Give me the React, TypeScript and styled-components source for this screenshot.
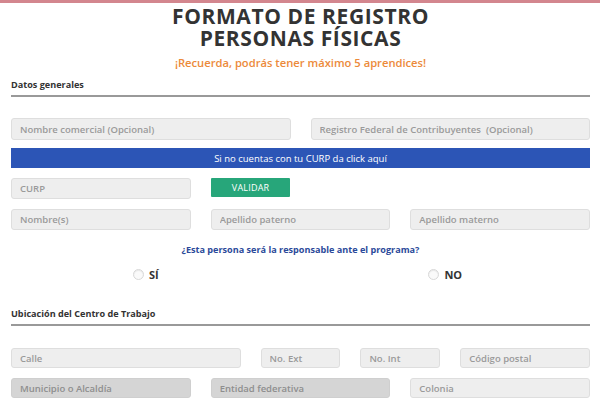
import React from "react";
import styled, { createGlobalStyle } from "styled-components";

const Global = createGlobalStyle`
  html, body { margin: 0; padding: 0; background: #fff; }
  body { font-family: "Open Sans", "Liberation Sans", sans-serif; }
  * { box-sizing: border-box; }
`;

const Page = styled.div`
  width: 600px;
  height: 403px;
  overflow: hidden;
  border-top: 3px solid #d3868e;
  padding: 0 10px 0 11px;
`;

const Title = styled.h1`
  margin: 2px 0 0;
  text-align: center;
  font-family: "Open Sans", sans-serif;
  font-weight: 700;
  font-size: 21px;
  line-height: 22px;
  color: #333;
  letter-spacing: 0.6px;
`;

const TitleLine = styled.span`
  display: block;
  height: 22px;
`;

const Subtitle = styled.p`
  margin: 7px 0 0;
  text-align: center;
  font-weight: 600;
  font-size: 11.2px;
  line-height: 14px;
  color: #ec8a3a;
`;

const SectionHead = styled.div<{ $top: number }>`
  margin-top: ${(p) => p.$top}px;
  padding-bottom: 4px;
  border-bottom: 2px solid #999;
  font-weight: 700;
  font-size: 9.1px;
  line-height: 12px;
  color: #333;
`;

const Grid = styled.div<{ $top: number }>`
  display: grid;
  grid-template-columns: repeat(12, 1fr);
  column-gap: 20px;
  margin-top: ${(p) => p.$top}px;
`;

const Field = styled.input<{ $span: number; $dark?: boolean; $h?: number }>`
  grid-column: span ${(p) => p.$span};
  height: ${(p) => p.$h ?? 21}px;
  width: 100%;
  background: ${(p) => (p.$dark ? "#d5d5d5" : "#eeeeee")};
  border: 1px solid ${(p) => (p.$dark ? "#cfcfcf" : "#dedede")};
  border-radius: 3px;
  padding: 0 8px;
  font-family: "Open Sans", sans-serif;
  font-weight: 600;
  font-size: 9.5px;
  outline: none;
  &::placeholder {
    color: ${(p) => (p.$dark ? "#8e8e8e" : "#9a9a9a")};
  }
`;

const BlueBar = styled.div`
  margin-top: 8px;
  height: 20px;
  background: #2c55b6;
  color: #fff;
  font-size: 9.5px;
  display: flex;
  align-items: center;
  justify-content: center;
`;

const Validate = styled.button`
  grid-column: span 2;
  height: 19px;
  background: #27a67a;
  border: none;
  border-radius: 1px;
  color: #fff;
  font-family: "Open Sans", sans-serif;
  font-size: 9px;
  letter-spacing: 0.2px;
  padding: 0;
`;

const Question = styled.p`
  margin: 14px 0 0;
  text-align: center;
  font-weight: 700;
  font-size: 9.1px;
  line-height: 12px;
  color: #2b4a9a;
`;

const Radios = styled.div`
  display: grid;
  grid-template-columns: 1fr 1fr;
  margin-top: 11px;
`;

const RadioOpt = styled.label<{ $nudge?: number }>`
  display: flex;
  align-items: center;
  justify-content: center;
  gap: 5px;
  padding-right: ${(p) => p.$nudge ?? 0}px;
  font-weight: 700;
  font-size: 11px;
  line-height: 15px;
  color: #333;
`;

const Circle = styled.span`
  width: 11px;
  height: 11px;
  border-radius: 50%;
  border: 1px solid #d8d8d8;
  background: #fafafa;
  box-shadow: inset 0 1px 1px rgba(0, 0, 0, 0.08);
`;

export default function App() {
  return (
    <>
      <Global />
      <Page>
        <Title>
          <TitleLine>FORMATO DE REGISTRO</TitleLine>
          <TitleLine>PERSONAS FÍSICAS</TitleLine>
        </Title>
        <Subtitle>¡Recuerda, podrás tener máximo 5 aprendices!</Subtitle>

        <SectionHead $top={9}>Datos generales</SectionHead>
        <Grid $top={21}>
          <Field $span={6} $h={22} placeholder="Nombre comercial (Opcional)" />
          <Field $span={6} $h={22} placeholder="Registro Federal de Contribuyentes  (Opcional)" />
        </Grid>
        <BlueBar>Si no cuentas con tu CURP da click aquí</BlueBar>
        <Grid $top={10}>
          <Field $span={4} placeholder="CURP" />
          <Validate>VALIDAR</Validate>
        </Grid>
        <Grid $top={10}>
          <Field $span={4} placeholder="Nombre(s)" />
          <Field $span={4} placeholder="Apellido paterno" />
          <Field $span={4} placeholder="Apellido materno" />
        </Grid>
        <Question>¿Esta persona será la responsable ante el programa?</Question>
        <Radios>
          <RadioOpt $nudge={20}>
            <Circle />
            SÍ
          </RadioOpt>
          <RadioOpt>
            <Circle />
            NO
          </RadioOpt>
        </Radios>

        <SectionHead $top={26}>Ubicación del Centro de Trabajo</SectionHead>
        <Grid $top={22}>
          <Field $span={5} $h={20} placeholder="Calle" />
          <Field $span={2} $h={20} placeholder="No. Ext" />
          <Field $span={2} $h={20} placeholder="No. Int" />
          <Field $span={3} $h={20} placeholder="Código postal" />
        </Grid>
        <Grid $top={10}>
          <Field $span={4} $h={20} $dark placeholder="Municipio o Alcaldía" />
          <Field $span={4} $h={20} $dark placeholder="Entidad federativa" />
          <Field $span={4} $h={20} placeholder="Colonia" />
        </Grid>
      </Page>
    </>
  );
}
